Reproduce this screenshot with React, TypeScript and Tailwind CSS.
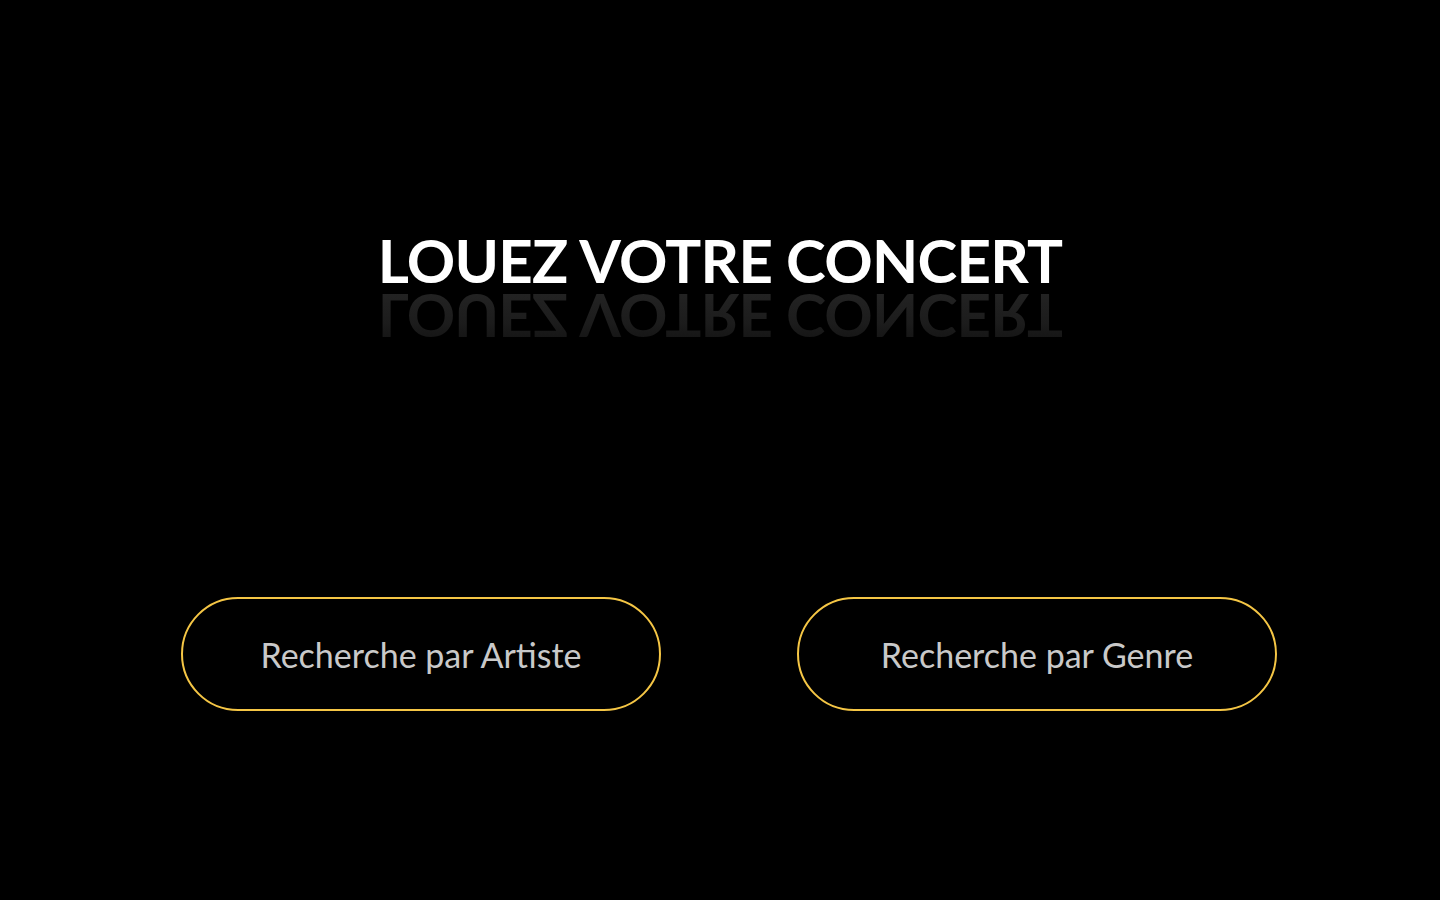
import React from "react";

export default function App() {
  const title = "LOUEZ VOTRE CONCERT";
  return (
    <div className="min-h-[900px] w-full bg-black font-['Lato','Noto_Sans',sans-serif]">
      <div className="flex flex-col items-center pt-[230px]">
        <h1 className="text-[60px] font-bold leading-none text-white tracking-[-0.7px]">{title}</h1>
        <div
          aria-hidden="true"
          className="-mt-[3px] scale-y-[-1] bg-[linear-gradient(to_top,#242424,#1c1c1c_60%,#121212)] bg-clip-text text-[60px] font-bold leading-none tracking-[-0.7px] text-transparent select-none"
        >
          {title}
        </div>
      </div>
      <div className="mt-[250px] flex pl-[181px] gap-[136px]">
        <button className="flex h-[114px] w-[480px] items-center justify-center rounded-full border-2 border-[#f5c645] bg-black text-[34px] text-[#c9c9c9]">
          Recherche par Artiste
        </button>
        <button className="flex h-[114px] w-[480px] items-center justify-center rounded-full border-2 border-[#f5c645] bg-black text-[34px] text-[#c9c9c9]">
          Recherche par Genre
        </button>
      </div>
    </div>
  );
}
